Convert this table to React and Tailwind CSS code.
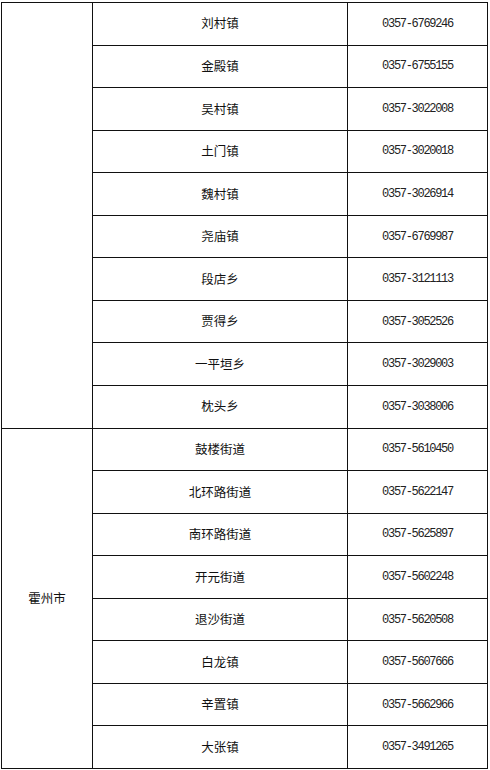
import React from 'react';

const rows = [
    ['刘村镇', '0357-6769246'],
    ['金殿镇', '0357-6755155'],
    ['吴村镇', '0357-3022008'],
    ['土门镇', '0357-3020018'],
    ['魏村镇', '0357-3026914'],
    ['尧庙镇', '0357-6769987'],
    ['段店乡', '0357-3121113'],
    ['贾得乡', '0357-3052526'],
    ['一平垣乡', '0357-3029003'],
    ['枕头乡', '0357-3038006'],
    ['鼓楼街道', '0357-5610450'],
    ['北环路街道', '0357-5622147'],
    ['南环路街道', '0357-5625897'],
    ['开元街道', '0357-5602248'],
    ['退沙街道', '0357-5620508'],
    ['白龙镇', '0357-5607666'],
    ['辛置镇', '0357-5662966'],
    ['大张镇', '0357-3491265'],
];

const cjk = { fontFamily: '"Noto Sans CJK SC", sans-serif' };
const mono = { fontFamily: '"Liberation Mono", monospace' };

const App = () => {
    return (
        <div className="w-[490px] h-[770px] bg-white pt-[2px] pl-[1px]">
            <div className="grid grid-cols-[90px_254px_139px] grid-rows-[repeat(18,minmax(0,1fr))] gap-px bg-[#111] p-px w-[487px] h-[767px]">
                <div className="bg-white row-span-10" />
                <div
                    className="bg-white row-span-8 col-start-1 flex items-center justify-center text-[12.5px] text-[#111]"
                    style={cjk}
                >
                    霍州市
                </div>
                {rows.map(([name, phone], i) => (
                    <React.Fragment key={name}>
                        <div
                            className="bg-white col-start-2 flex items-center justify-center text-[12.5px] text-[#111]"
                            style={{ ...cjk, gridRowStart: i + 1 }}
                        >
                            {name}
                        </div>
                        <div
                            className="bg-white col-start-3 flex items-center justify-center text-[12px] tracking-[-1.3px] text-[#222]"
                            style={{ ...mono, gridRowStart: i + 1 }}
                        >
                            {phone}
                        </div>
                    </React.Fragment>
                ))}
            </div>
        </div>
    );
};

export default App;
